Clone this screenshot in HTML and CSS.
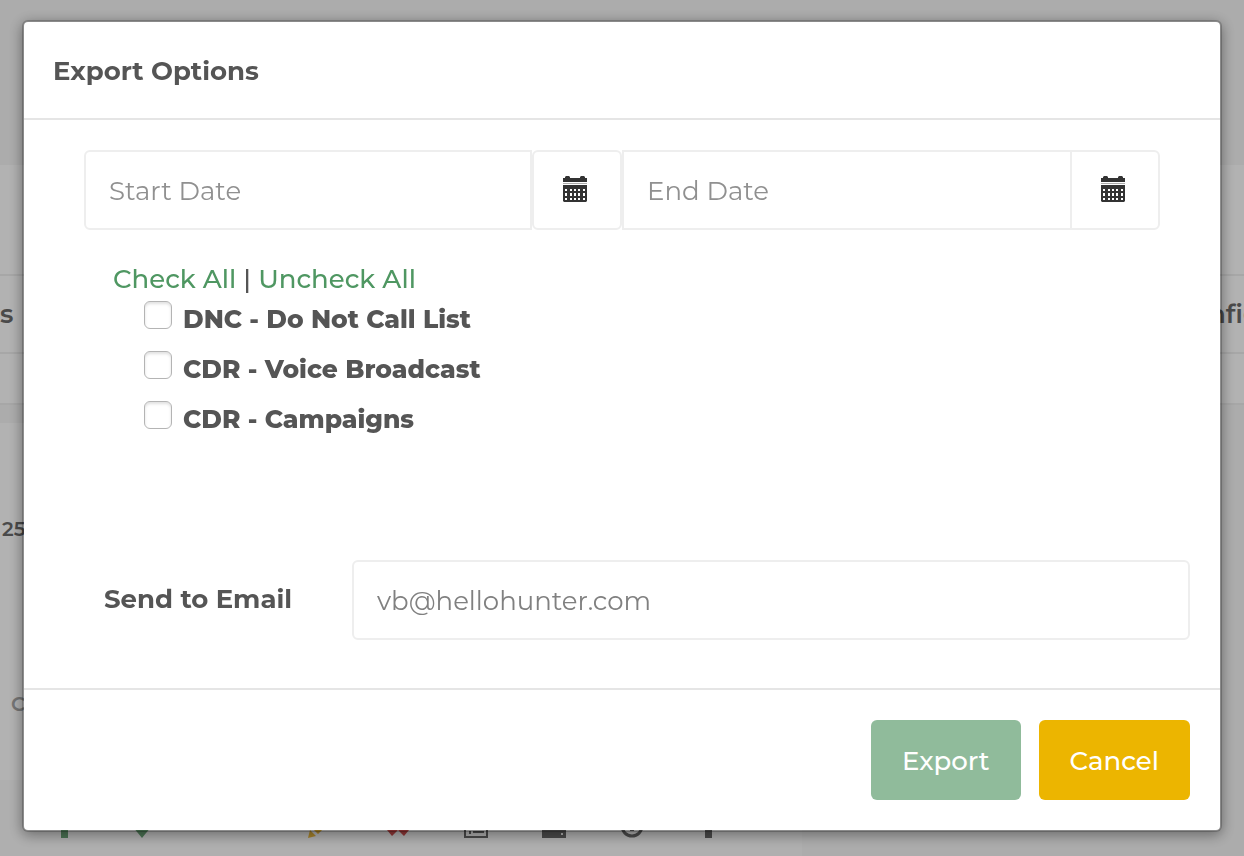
FILE: index.html
```html
<!DOCTYPE html>
<html lang="en">
<head>
  <meta charset="UTF-8" />
  <meta name="viewport" content="width=device-width, initial-scale=1.0" />
  <title>Export Options</title>
  <link rel="stylesheet" href="styles.css">
</head>
<body>
  <div class="page">
    <div class="card table-card">
      <div class="table-head"><span>s</span><span>Config</span></div>
    </div>
    <div class="card side-card">
      <div class="count">25</div>
      <div class="legend">C</div>
      <div class="tools">
        <div class="tool-group">
          <svg class="green" viewBox="0 0 24 24"><path d="M9 10h7v14H9z"/></svg>
          <svg class="green" viewBox="0 0 24 24"><path d="M3 13h18L12 24z"/></svg>
        </div>
        <div class="tool-group">
          <svg class="yellow" viewBox="0 0 24 24"><path d="M0 24l2-8 6 6zM4 14L15 3l6 6-11 11z"/></svg>
          <svg class="red" viewBox="0 0 24 24"><path d="M1 16l5-6 6 6 6-6 5 6-5 6-6-6-6 6z"/></svg>
          <svg viewBox="0 0 24 24"><path fill-rule="evenodd" d="M0 2h24v22H0zM2 6v16h20V6zM5 17h2v3H5zM9 17h11v2H9z"/></svg>
          <svg viewBox="0 0 24 24"><path fill-rule="evenodd" d="M0 15h24v9H0zM19 19v2h2v-2z"/></svg>
          <svg viewBox="0 0 24 24"><circle cx="12" cy="12" r="10" fill="none" stroke="#6a6a6a" stroke-width="3"/><path d="M10 6h4v11h-4z"/></svg>
          <svg viewBox="0 0 24 24"><path d="M7 10h7v14H7z"/></svg>
        </div>
      </div>
    </div>
  </div>

  <div class="overlay">
    <form class="modal" role="dialog" aria-labelledby="modal-title">
      <div class="modal-header">
        <h4 id="modal-title">Export Options</h4>
      </div>
      <div class="modal-body">
        <div class="date-range">
          <input type="text" class="field start" placeholder="Start Date" aria-label="Start Date" />
          <button type="button" class="date-btn" aria-label="Pick start date">
            <svg viewBox="0 0 24 26"><path fill-rule="evenodd" d="M0 2h2V1l1-1h3l1 1v1h10V1l1-1h3l1 1v1h2v4H0zM0 9h24v16l-1 1H1l-1-1zM2 13v2h2v-2zM7 13v2h2v-2zM11 13v2h2v-2zM15 13v2h2v-2zM20 13v2h2v-2zM2 17v3h2v-3zM7 17v3h2v-3zM11 17v3h2v-3zM15 17v3h2v-3zM20 17v3h2v-3zM2 22v2h2v-2zM7 22v2h2v-2zM11 22v2h2v-2zM15 22v2h2v-2zM20 22v2h2v-2z"/><path d="M0 7h24v1H0z" opacity=".4"/></svg>
          </button>
          <input type="text" class="field end" placeholder="End Date" aria-label="End Date" />
          <button type="button" class="date-btn last" aria-label="Pick end date">
            <svg viewBox="0 0 24 26"><path fill-rule="evenodd" d="M0 2h2V1l1-1h3l1 1v1h10V1l1-1h3l1 1v1h2v4H0zM0 9h24v16l-1 1H1l-1-1zM2 13v2h2v-2zM7 13v2h2v-2zM11 13v2h2v-2zM15 13v2h2v-2zM20 13v2h2v-2zM2 17v3h2v-3zM7 17v3h2v-3zM11 17v3h2v-3zM15 17v3h2v-3zM20 17v3h2v-3zM2 22v2h2v-2zM7 22v2h2v-2zM11 22v2h2v-2zM15 22v2h2v-2zM20 22v2h2v-2z"/><path d="M0 7h24v1H0z" opacity=".4"/></svg>
          </button>
        </div>

        <div class="check-links"><a href="#">Check All</a> | <a href="#">Uncheck All</a></div>
        <div class="checks">
          <label><input type="checkbox" /><span>DNC - Do Not Call List</span></label>
          <label><input type="checkbox" /><span>CDR - Voice Broadcast</span></label>
          <label><input type="checkbox" /><span>CDR - Campaigns</span></label>
        </div>

        <div class="email-row">
          <label for="email">Send to Email</label>
          <input type="email" class="field" id="email" value="vb@hellohunter.com" />
        </div>
      </div>
      <div class="modal-footer">
        <button type="submit" class="btn export">Export</button>
        <button type="button" class="btn cancel">Cancel</button>
      </div>
    </form>
  </div>
</body>
</html>
```
FILE: styles.css
```css
* {
  box-sizing: border-box;
}
body {
  margin: 0;
  height: 100vh;
  overflow: hidden;
  background-color: #f7f7f7;
  color: #555;
  font-family: Montserrat, Inter, sans-serif;
  font-size: 26px;
  line-height: 40px;
}

/* page behind the modal */
.page {
  padding-top: 165px;
  color: #6a6a6a;
}
.card {
  background-color: #fff;
  border-bottom: 2px solid #efefef;
}
.table-card {
  padding: 109px 0 49px;
  margin-bottom: 18px;
}
.table-head {
  display: flex;
  justify-content: space-between;
  padding: 18px 0;
  margin-right: -17px;
  border-top: 2px solid #efefef;
  border-bottom: 2px solid #efefef;
  font-weight: 600;
}
.side-card {
  width: 802px;
}
.count {
  padding: 86px 2px 0;
  font-size: 20px;
  font-weight: 600;
}
.legend {
  padding: 135px 11px 56px;
  font-size: 20px;
  font-weight: 600;
  color: #a8a8a8;
}
.tools {
  display: flex;
  gap: 100px;
  padding: 34px 25px 40px;
  background-color: #fbfbfb;
}
.tool-group {
  display: flex;
}
.tools svg {
  width: 24px;
  height: 24px;
  margin: 0 27px;
  fill: #6a6a6a;
}
.tools .green {
  fill: #6ba578;
}
.tools .yellow {
  fill: #edba3c;
}
.tools .red {
  fill: #d25050;
}

/* modal */
.overlay {
  position: fixed;
  inset: 0;
  padding: 20px 22px;
  background-color: rgba(0,0,0,0.3);
}
.modal {
  background-color: #fff;
  background-clip: padding-box;
  border: 2px solid rgba(0,0,0,0.2);
  border-radius: 6px;
  box-shadow: 0 3px 14px rgba(0,0,0,0.4);
}
.modal-header {
  padding: 29px 29px 27px;
  border-bottom: 2px solid #e5e5e5;
}
h4 {
  margin: 0;
  font-size: 26px;
  font-weight: 700;
}
.modal-body {
  padding: 30px 30px 48px;
}
.date-range {
  display: grid;
  grid-template-columns: 1fr 90px 1fr 90px;
  margin: 0 30px;
}
.field {
  flex: 1;
  min-width: 0;
  height: 80px;
  padding: 2px 23px 0;
  border: 2px solid #eee;
  border-radius: 6px;
  background-color: #fff;
  color: #808080;
  font: inherit;
}
.field::placeholder {
  color: #909090;
}
.field.start {
  border-radius: 6px 0 0 6px;
}
.field.end {
  border-right: none;
  border-radius: 0;
}
.date-btn {
  height: 80px;
  padding: 0 4px 2px 0;
  border: 2px solid #eee;
  border-radius: 6px;
  background-color: #fff;
  cursor: pointer;
}
.date-btn.last {
  border-radius: 0 6px 6px 0;
}
.date-btn svg {
  display: block;
  width: 24px;
  height: 26px;
  margin: 0 auto;
  fill: #333;
}
.check-links {
  margin: 29px 59px 0;
  font-weight: 500;
}
.check-links a {
  color: #4f9762;
  text-decoration: none;
}
.checks {
  margin: 0 90px 111px;
}
.checks label {
  display: flex;
  gap: 11px;
  height: 50px;
  font-size: 25px;
  font-weight: 800;
}
.checks input {
  appearance: none;
  width: 28px;
  height: 28px;
  margin: 2px 0 0;
  border: 1px solid #b4b4b4;
  border-radius: 6px;
  background-color: #fff;
  box-shadow: inset 0 2px 3px rgba(0,0,0,0.12);
}
.checks input:checked {
  background-color: #4f9762;
}
.email-row {
  display: flex;
  align-items: center;
}
.email-row label {
  width: 298px;
  padding: 0 0 2px 50px;
  font-weight: 700;
}
.modal-footer {
  display: flex;
  justify-content: flex-end;
  gap: 18px;
  padding: 30px;
  border-top: 2px solid #e5e5e5;
}
.btn {
  height: 80px;
  padding: 2px 31px 0;
  border: none;
  border-radius: 6px;
  color: #fff;
  font: inherit;
  font-weight: 500;
  cursor: pointer;
}
.export {
  background-color: #90bb9b;
}
.cancel {
  background-color: #ecb500;
}
```
